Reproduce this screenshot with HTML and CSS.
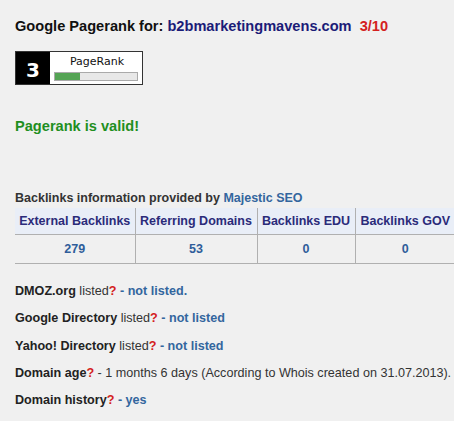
FILE: index.html
```html
<!DOCTYPE html>
<html lang="en">
<head>
    <meta charset="UTF-8">
    <title>Google Pagerank</title>
    <link rel="stylesheet" href="styles.css">
</head>
<body>
    <div class="page">
        <h1 class="title">Google Pagerank for: <span class="domain">b2bmarketingmavens.com</span> <span class="rank">3/10</span></h1>

        <div class="pr-badge">
            <div class="pr-num">3</div>
            <div class="pr-info">
                <div class="pr-label">PageRank</div>
                <div class="pr-bar"><div class="pr-fill" style="width: 30%"></div></div>
            </div>
        </div>

        <p class="valid">Pagerank is valid!</p>

        <p class="provided">Backlinks information provided by <a class="link">Majestic SEO</a></p>
        <table class="backlinks">
            <colgroup>
                <col class="col-ext">
                <col class="col-ref">
                <col class="col-edu">
                <col class="col-gov">
            </colgroup>
            <tr>
                <th>External Backlinks</th>
                <th>Referring Domains</th>
                <th>Backlinks EDU</th>
                <th>Backlinks GOV</th>
            </tr>
            <tr>
                <td>279</td>
                <td>53</td>
                <td>0</td>
                <td>0</td>
            </tr>
        </table>

        <div class="facts">
            <p><b>DMOZ.org</b> listed<span class="q">?</span> <b class="ans">- not listed.</b></p>
            <p><b>Google Directory</b> listed<span class="q">?</span> <b class="ans">- not listed</b></p>
            <p><b>Yahoo! Directory</b> listed<span class="q">?</span> <b class="ans">- not listed</b></p>
            <p><b>Domain age</b><span class="q">?</span> - 1 months 6 days (According to Whois created on 31.07.2013).</p>
            <p><b>Domain history</b><span class="q">?</span> <b class="ans">- yes</b></p>
        </div>
    </div>
</body>
</html>
```

FILE: styles.css
```css
/* Estilos Gerais */
body {
    margin: 0;
    background-color: #f0f0f0;
    font-family: "Liberation Sans", Arial, sans-serif;
    color: #222;
    overflow: hidden;
}
.page {
    padding: 18px 0 0 15px;
}
.title {
    font-size: 14.6px;
    font-weight: bold;
    color: #111;
    margin: 0;
    white-space: nowrap;
}
.domain {
    color: #1c1c78;
    margin-right: 4px;
}
.rank {
    color: #d42020;
}

/* Badge PageRank */
.pr-badge {
    display: flex;
    width: 126px;
    height: 32px;
    border: 1px solid #333;
    margin-top: 17px;
    background-color: #fff;
}
.pr-num {
    width: 34px;
    background-color: #000;
    color: #fff;
    font-family: "DejaVu Sans", sans-serif;
    font-weight: bold;
    font-size: 20px;
    display: flex;
    align-items: center;
    justify-content: center;
    padding-top: 4px;
    box-sizing: border-box;
}
.pr-info {
    flex: 1;
    padding: 3px 4px 0 4px;
}
.pr-label {
    font-family: "DejaVu Sans", sans-serif;
    font-size: 11px;
    color: #111;
    text-align: center;
    line-height: 14px;
    padding-left: 2px;
}
.pr-bar {
    margin-top: 3px;
    height: 7px;
    border: 1px solid #aaa;
    background-color: #e8e8e8;
}
.pr-fill {
    height: 100%;
    background-color: #55a455;
}

.valid {
    color: #1f8f1f;
    font-weight: bold;
    font-size: 14.6px;
    margin: 33px 0 0 0;
}

.provided {
    font-size: 12.5px;
    font-weight: bold;
    color: #333;
    margin: 57px 0 0 0;
}
.link {
    color: #33669e;
}

/* Tabela */
.backlinks {
    border-collapse: collapse;
    table-layout: fixed;
    margin-top: 3px;
    width: 440px;
    font-size: 12.5px;
}
.col-ext { width: 120px; }
.col-ref { width: 122px; }
.col-edu { width: 98px; }
.col-gov { width: 100px; }
.backlinks th {
    background-color: #e9eef7;
    color: #2b2b7a;
    height: 26px;
    padding: 0;
    border-left: 1px solid #b0b0b0;
    border-bottom: 1px solid #b0b0b0;
    white-space: nowrap;
}
.backlinks td {
    color: #2f5d9a;
    font-weight: bold;
    text-align: center;
    height: 28px;
    padding: 0;
    border-left: 1px solid #b0b0b0;
    border-bottom: 1px solid #b0b0b0;
}
.backlinks th:first-child, .backlinks td:first-child {
    border-left: none;
}

.facts {
    margin-top: 14px;
    font-size: 12.6px;
    color: #333;
}
.facts p {
    margin: 0;
    line-height: 27.3px;
}
.facts b {
    color: #222;
}
.facts .ans {
    color: #33669e;
}
.q {
    color: #d42020;
    font-weight: bold;
}
```
